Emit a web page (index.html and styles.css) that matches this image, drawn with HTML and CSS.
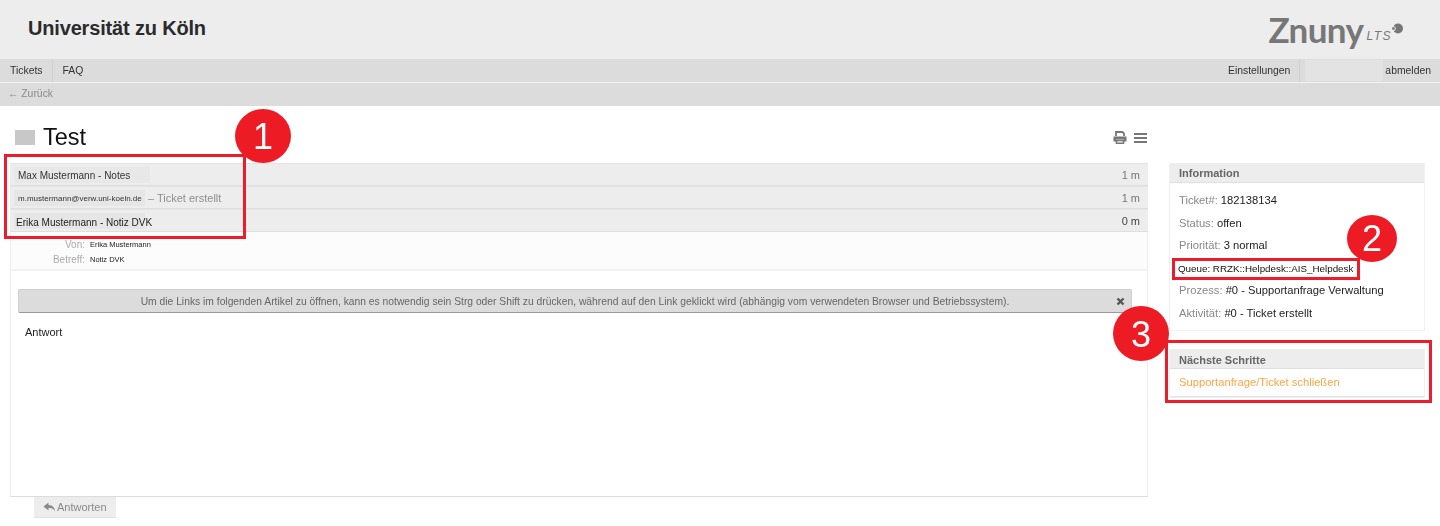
FILE: index.html
```html
<!DOCTYPE html>
<html lang="de">
<head>
    <meta charset="UTF-8">
    <title>Test - Ticket</title>
    <link rel="stylesheet" href="styles.css">
</head>
<body>
    <header class="top">
        <h1 class="org">Universität zu Köln</h1>
        <div class="logo">
            <span class="logo-name">Znuny</span><span class="logo-lts">LTS</span>
            <svg class="logo-mark" width="11" height="11" viewBox="0 0 11 11"><circle cx="6" cy="5.500" r="5" fill="#777"/><path d="M0 2.500c2.500.5 3.800 1.700 3.800 3S2.500 8.300 0 8.500" fill="#ededed"/><circle cx="1.500" cy="5.500" r="1.400" fill="#777"/></svg>
        </div>
    </header>

    <nav class="nav">
        <div class="nav-left">
            <a class="nav-item nav-first">Tickets</a>
            <a class="nav-item">FAQ</a>
        </div>
        <div class="nav-right">
            <a class="nav-item nav-settings">Einstellungen</a>
            <span class="nav-hidden"></span>
            <a class="nav-logout">abmelden</a>
        </div>
    </nav>

    <div class="subnav"><a>← Zurück</a></div>

    <div class="title-row">
        <span class="prio-box"></span>
        <h2 class="title">Test</h2>
        <div class="title-icons">
            <svg width="14" height="13" viewBox="0 0 14 13"><path d="M3 5V1h6.500L11 2.500V5" fill="none" stroke="#777" stroke-width="1.800"/><path d="M0.500 5.500h13v5H11V8.500H3v2H0.500z" fill="#777"/><path d="M3.500 9.500h7v2.700h-7z" fill="none" stroke="#777" stroke-width="1.600"/></svg>
            <svg width="13" height="12" viewBox="0 0 13 12"><path d="M0 1h13v2H0zM0 5h13v2H0zM0 9h13v2H0z" fill="#777"/></svg>
        </div>
    </div>

    <div class="content">
        <main class="main">
            <div class="articles">
                <div class="article-row">
                    <span class="who who-1">Max Mustermann - Notes</span>
                    <span class="age">1 m</span>
                </div>
                <div class="article-row">
                    <span class="who who-2">m.mustermann@verw.uni-koeln.de</span>
                    <span class="dash">– Ticket erstellt</span>
                    <span class="age">1 m</span>
                </div>
                <div class="article-row article-active">
                    <span class="who who-3">Erika Mustermann - Notiz DVK</span>
                    <span class="age">0 m</span>
                </div>
            </div>

            <div class="article">
                <div class="article-head">
                    <div class="head-row"><span class="head-label">Von:</span><span class="head-value">Erika Mustermann</span></div>
                    <div class="head-row"><span class="head-label">Betreff:</span><span class="head-value">Notiz DVK</span></div>
                </div>
                <div class="article-body">
                    <div class="notice">
                        <span class="notice-text">Um die Links im folgenden Artikel zu öffnen, kann es notwendig sein Strg oder Shift zu drücken, während auf den Link geklickt wird (abhängig vom verwendeten Browser und Betriebssystem).</span>
                        <svg class="notice-close" width="9" height="9" viewBox="0 0 9 9"><path d="M1.500 1.500l6 6M7.500 1.500l-6 6" stroke="#555" stroke-width="2.400"/></svg>
                    </div>
                    <p class="body-text">Antwort</p>
                </div>
            </div>

            <a class="reply">
                <svg width="13" height="11" viewBox="0 0 13 11"><path d="M5.500 0.500L0.500 4.500l5 4V6c3-.2 5 .5 6.500 3.500C11.800 5.500 9.500 3.200 5.500 3z" fill="#8a8a8a"/></svg>
                Antworten
            </a>
        </main>

        <aside class="side">
            <section class="widget">
                <h3 class="widget-head">Information</h3>
                <div class="widget-body info">
                    <p><span class="key">Ticket#:</span> 182138134</p>
                    <p><span class="key">Status:</span> offen</p>
                    <p><span class="key">Priorität:</span> 3 normal</p>
                    <p class="queue">Queue: RRZK::Helpdesk::AIS_Helpdesk</p>
                    <p><span class="key">Prozess:</span> #0 - Supportanfrage Verwaltung</p>
                    <p><span class="key">Aktivität:</span> #0 - Ticket erstellt</p>
                </div>
            </section>
            <section class="widget widget-next">
                <h3 class="widget-head">Nächste Schritte</h3>
                <div class="widget-body next"><a>Supportanfrage/Ticket schließen</a></div>
            </section>
        </aside>
    </div>

    <!-- annotations drawn over the screenshot -->
    <div class="mark box-1"></div>
    <div class="mark box-2"></div>
    <div class="mark box-3"></div>
    <div class="badge badge-1">1</div>
    <div class="badge badge-2">2</div>
    <div class="badge badge-3">3</div>
</body>
</html>
```

FILE: styles.css
```css
body {
    margin: 0;
    height: 526px;
    overflow: hidden;
    position: relative;
    background: #fff;
    font-family: "Liberation Sans", Arial, sans-serif;
    font-size: 11px;
    color: #222;
    filter: blur(0.35px); /* the source picture is a scaled, soft capture */
}

a { text-decoration: none; }
h1, h2, h3, p { margin: 0; }

/* header */
.top {
    height: 59px;
    background: #ededed;
    display: flex;
    align-items: center;
    justify-content: space-between;
    padding: 0 37px 2px 28px;
    box-sizing: border-box;
}

.org {
    font-size: 20px;
    font-weight: bold;
    letter-spacing: -0.17px;
    color: #2b2b2b;
}

.logo {
    display: flex;
    align-items: center;
    color: #777;
}

.logo-name {
    font-family: Lato, sans-serif;
    font-size: 35px;
    font-weight: 700;
    letter-spacing: -0.6px;
    line-height: 40px;
}

.logo-lts {
    font-size: 12px;
    font-style: italic;
    letter-spacing: 1.500px;
    margin: 14px 0 0 3px;
}

.logo-mark { margin-top: 0; }

.nav {
    height: 23px;
    background: #dcdcdc;
    display: flex;
    justify-content: space-between;
    border-bottom: 1px solid #f2f2f2;
    font-size: 10.400px;
}

.nav-left, .nav-right {
    display: flex;
    align-items: center;
}

.nav-item {
    padding: 0 10px;
    line-height: 23px;
    color: #333;
}

.nav-first {
    border-right: 1px solid #d0d0d0;
    padding-right: 9px;
}

.nav-settings {
    padding: 0 9px 0 10px;
    border-right: 1px solid #d0d0d0;
}

.nav-hidden {
    width: 78px;
    height: 21px;
    margin-left: 5px;
    background: #e3e3e3;
}

.nav-logout {
    color: #333;
    padding: 0 9px 0 2px;
}

.subnav {
    height: 23px;
    line-height: 22px;
    background: #dcdcdc;
    padding-left: 8px;
    color: #8a8a8a;
    font-size: 10.400px;
}

/* title */
.title-row {
    height: 57px;
    display: flex;
    align-items: center;
    padding: 6px 293px 0 15px;
    box-sizing: border-box;
}

.prio-box {
    width: 20px;
    height: 15px;
    background: #c8c8c8;
    margin-right: 8px;
}

.title {
    font-size: 23.500px;
    font-weight: normal;
    color: #111;
    flex: 1;
}

.title-icons {
    display: flex;
    gap: 7px;
    align-items: center;
}

.content {
    display: flex;
    padding-left: 10px;
}

/* articles */
.main {
    width: 1138px;
}

.articles {
    background: #ededed;
}

.article-row {
    height: 23px;
    display: flex;
    align-items: center;
    box-sizing: border-box;
    border-bottom: 1px solid #dfdfdf;
    border-top: 1px solid #e4e4e4;
    padding-right: 8px;
}

.who {
    background: #e6e6e6;
    height: 16px;
    line-height: 17px;
    margin-left: 4px;
    color: #333;
    white-space: nowrap;
}

.who-1 { width: 132px; padding-left: 4px; background: #e8e8e8; font-size: 10px; }
.who-2 { width: 127px; padding-left: 4px; font-size: 8px; }
.who-3 { width: 129px; padding-left: 2px; font-size: 10px; line-height: 19px; color: #222; }

.dash {
    font-size: 11px;
    color: #8f8f8f;
    margin-left: 3px;
}

.age {
    margin-left: auto;
    color: #777;
}

.article-active .age {
    color: #444;
}

.article {
    height: 265px;
    border-right: 1px solid #ededed;
    border-left: 1px solid #ededed;
    border-bottom: 1px solid #dcdcdc;
    box-sizing: border-box;
}

.article-head {
    height: 39px;
    padding-top: 5px;
    box-sizing: border-box;
    background: #fcfcfc;
    border-bottom: 2px solid #f2f2f2;
}

.head-row {
    display: flex;
    height: 15px;
    align-items: center;
    gap: 5px;
}

.head-label {
    width: 74px;
    text-align: right;
    color: #aaa;
    font-size: 10px;
}

.head-value {
    font-size: 7.500px;
    color: #222;
}

.article-body {
    padding: 18px 15px 0 7px;
}

.notice {
    height: 24px;
    background: #dcdcdc;
    border: 1px solid #d0d0d0;
    border-bottom: 1px solid #999;
    border-radius: 2px;
    display: flex;
    align-items: center;
    color: #666;
    font-size: 10.300px;
    box-sizing: border-box;
    padding: 0 6px 0 15px;
}

.notice-text {
    flex: 1;
    text-align: center;
}

.body-text {
    margin: 13px 0 0 7px;
    font-size: 11px;
    color: #222;
}

.reply {
    display: inline-flex;
    align-items: center;
    gap: 1px;
    margin-left: 24px;
    height: 21px;
    width: 82px;
    box-sizing: border-box;
    padding-left: 9px;
    background: #ededed;
    color: #8a8a8a;
    font-size: 11px;
    border-bottom: 1px solid #e2e2e2;
}

/* sidebar */
.side {
    width: 256px;
    margin-left: 21px;
}

.widget {
    border: 1px solid #f0f0f0;
    border-top: 0;
}

.widget-head {
    height: 19px;
    line-height: 21px;
    background: #ededed;
    padding-left: 9px;
    font-size: 11px;
    font-weight: bold;
    color: #666;
    border-bottom: 1px solid #e0e0e0;
}

.info {
    height: 147px;
    padding: 6px 0 0 9px;
    box-sizing: border-box;
}

.info p {
    height: 22.600px;
    line-height: 22.600px;
    font-size: 11.200px;
    color: #222;
}

.key {
    color: #888;
}

.info .queue {
    font-size: 9.800px;
    line-height: 24px;
    color: #111;
    margin-left: -1px;
}

.widget-next {
    margin-top: 18px;
}

.widget-next .widget-head {
    line-height: 23px;
}

.next {
    height: 28px;
    line-height: 27px;
    padding-left: 9px;
    box-sizing: border-box;
    border-bottom: 1px solid #e4e4e4;
    font-size: 11.200px;
}

.next a {
    color: #fba544;
}

/* annotations */
.mark {
    position: absolute;
    border: 3px solid #ec1c2c;
    box-sizing: border-box;
}

.box-1 { left: 4px; top: 154px; width: 242px; height: 85px; }
.box-2 { left: 1172px; top: 258px; width: 188px; height: 22px; }
.box-3 { left: 1165px; top: 340px; width: 267px; height: 63px; }

.badge {
    position: absolute;
    background: #ed1c24;
    color: #fff;
    border-radius: 50%;
    text-align: center;
    font-size: 36px;
}

.badge-1 { left: 235px; top: 109px; width: 56px; height: 54px; line-height: 56px; }
.badge-2 { left: 1347px; top: 215px; width: 50px; height: 47px; line-height: 48px; }
.badge-3 { left: 1113px; top: 306px; width: 56px; height: 55px; line-height: 57px; }
```
